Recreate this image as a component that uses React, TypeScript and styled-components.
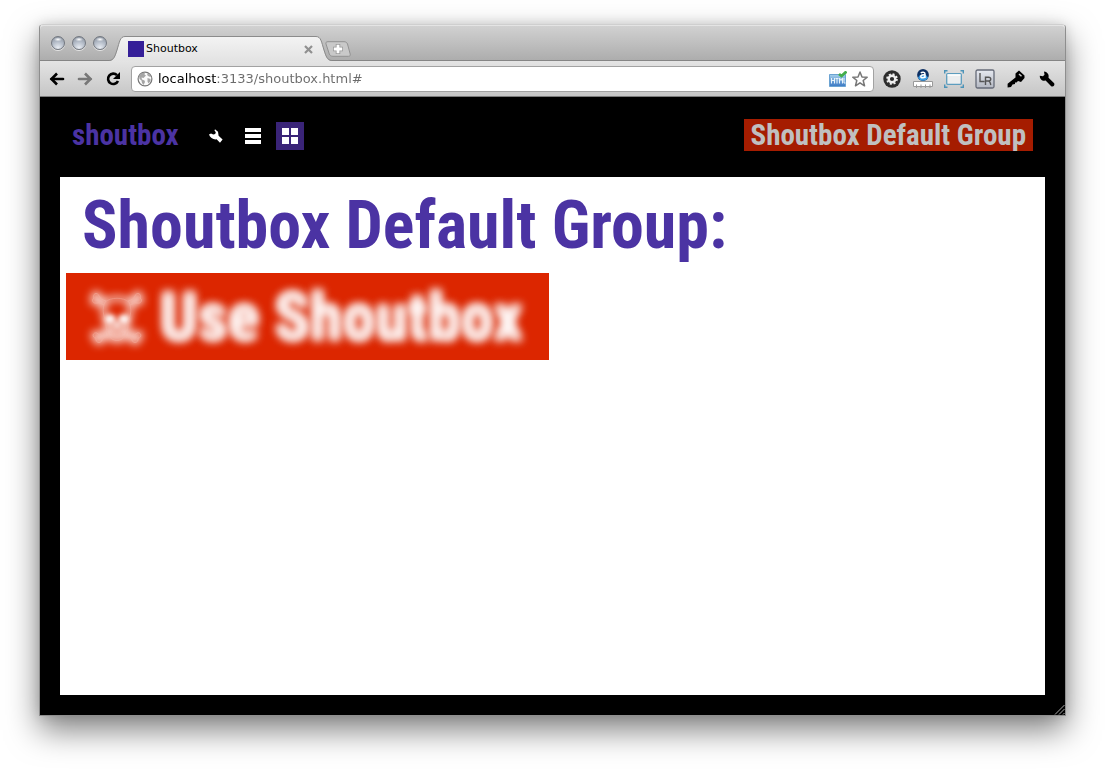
import React, { useState } from "react";
import styled, { createGlobalStyle, css } from "styled-components";

const GlobalStyle = createGlobalStyle`
  * { box-sizing: border-box; }
  body { margin: 0; background: #fff; }
  button { margin: 0; padding: 0; border: 0; background: none; font: inherit; color: inherit; cursor: pointer; }
  svg { display: block; }
`;

const displayFont = css`
  font-family: "Roboto Condensed", "Open Sans Condensed", "Liberation Sans", sans-serif;
  font-weight: 700;
`;
const uiFont = css`
  font-family: "DejaVu Sans", "Noto Sans", sans-serif;
`;

const Desktop = styled.div`
  display: flex;
  min-height: 100vh;
  padding: 24px 39px 54px;
`;

const BrowserWindow = styled.div`
  position: relative;
  display: flex;
  flex-direction: column;
  flex: 1;
  min-width: 0;
  border: 1px solid #8e8e8e;
  border-top-color: #cfcfcf;
  border-radius: 4px 4px 0 0;
  box-shadow: 0 14px 32px rgba(0, 0, 0, 0.5), 0 0 12px rgba(0, 0, 0, 0.12);
`;

const TabStrip = styled.div`
  display: flex;
  align-items: flex-end;
  height: 36px;
  border-radius: 4px 4px 0 0;
  background: linear-gradient(#d2d2d2, #acacac);
  box-shadow: inset 0 1px 0 #e4e4e4, inset 0 -1px 0 #858585;
`;

const Lights = styled.div`
  display: flex;
  gap: 7px;
  padding: 0 2px 11px 11px;
`;

const Light = styled.button`
  width: 14px;
  height: 14px;
  border: 1px solid #737880;
  border-radius: 50%;
  background: radial-gradient(ellipse 4px 2px at 50% 20%, #fff, transparent),
    radial-gradient(circle at 50% 90%, #e9edf3 0, #b4bcc8 50%, #858d99 100%);
  box-shadow: 0 1px 0 #e4e4e4;
`;

const Tab = styled.div`
  display: flex;
  flex: 0 0 223px;
  height: 25px;
`;

const TabBody = styled.div`
  ${uiFont}
  display: flex;
  align-items: center;
  flex: 1;
  padding: 0 3px;
  border-top: 1px solid #8b8b8b;
  background: linear-gradient(#f3f3f3, #e3e3e3);
  font-size: 11px;
  line-height: 16px;
  color: #000;
`;

const Favicon = styled.span`
  width: 16px;
  height: 16px;
  margin-right: 2px;
  background: #351f98;
`;

const TabTitle = styled.span`
  flex: 1;
`;

const NewTab = styled.button`
  position: relative;
  margin: 0 0 4px -7px;
`;

const Toolbar = styled.div`
  display: flex;
  align-items: center;
  height: 36px;
  padding: 0 3px;
  border-bottom: 1px solid #7c7c7c;
  background: linear-gradient(#e4e4e4, #c6c6c6);
`;

const ToolButton = styled.button<{ $width: number }>`
  display: flex;
  align-items: center;
  justify-content: center;
  flex: 0 0 ${(p) => p.$width}px;
  height: 28px;
`;

const AddressBar = styled.label`
  display: flex;
  align-items: center;
  flex: 1;
  min-width: 0;
  height: 26px;
  margin: 0 2px 0 4px;
  padding: 0 5px;
  gap: 5px;
  border: 1px solid #a2a2a2;
  border-radius: 4px;
  background: #fff;
`;

const AddressInput = styled.input`
  ${uiFont}
  flex: 1;
  min-width: 0;
  height: 22px;
  padding: 0;
  border: 0;
  outline: 0;
  background: linear-gradient(90deg, #000 59px, #6b6b6b 59px);
  background-clip: text;
  -webkit-background-clip: text;
  color: transparent;
  caret-color: #000;
  font-size: 13px;
`;

const Page = styled.div`
  ${displayFont}
  display: flex;
  flex-direction: column;
  flex: 1;
  padding: 0 20px 20px;
  background: #000;
`;

const Header = styled.header`
  display: flex;
  align-items: center;
  height: 80px;
  padding: 0 12px 4px;
  font-size: 29px;
  line-height: 32px;
`;

const Logo = styled.a`
  flex: 0 0 130px;
  color: #4b33a3;
  text-decoration: none;
`;

const Views = styled.nav`
  display: flex;
  flex: 1;
  gap: 9px;
  padding-top: 2px;
`;

const ViewButton = styled.button<{ $active?: boolean }>`
  display: flex;
  align-items: center;
  justify-content: center;
  width: 28px;
  height: 28px;
  background: ${(p) => (p.$active ? "#3a2478" : "transparent")};
`;

const GroupTag = styled.button`
  padding: 0 7px;
  background: #a51c00;
  color: #c0c0c0;
  white-space: nowrap;
`;

const Board = styled.main`
  flex: 1;
  padding: 7px 6px;
  background: #fff;
`;

const Heading = styled.h1`
  margin: 0 0 5px;
  padding: 0 16px;
  font-size: 66px;
  line-height: 84px;
  color: #4b33a3;
`;

const Shout = styled.button`
  display: flex;
  align-items: center;
  height: 87px;
  padding: 2px 26px 0 24px;
  gap: 16px;
  background: #dc2600;
  font-size: 66px;
  line-height: 85px;
  white-space: nowrap;
`;

const ShoutText = styled.span`
  color: transparent;
  text-shadow: 0 0 10px #fff, 0 0 10px rgba(255, 255, 255, 0.7);
`;

const ResizeGrip = styled.svg`
  position: absolute;
  right: 0;
  bottom: 0;
`;

const TabEdge = ({ flip, id }: { flip?: boolean; id: string }) => (
  <svg width="16" height="25" viewBox="0 0 16 25" aria-hidden="true">
    <defs>
      <linearGradient id={id} x1="0" y1="0" x2="0" y2="1">
        <stop offset="0" stopColor="#f3f3f3" />
        <stop offset="1" stopColor="#e3e3e3" />
      </linearGradient>
    </defs>
    <g transform={flip ? "translate(16 0) scale(-1 1)" : undefined}>
      <path d="M0 25C5 24.500 6 21 8 15C10.500 7 11 .5 16 .5V25Z" fill={`url(#${id})`} />
      <path d="M0 24.500C5 24.300 6 20 8 14C10.500 6 11 .5 16 .5" fill="none" stroke="#8b8b8b" />
    </g>
  </svg>
);

const PlusTab = () => (
  <svg width="26" height="16" viewBox="0 0 26 16">
    <path d="M3 .7H19C21 .7 21.800 1.500 22.500 3L25.200 13C25.500 14.600 25 15.300 23.500 15.300H8C6 15.300 5 14.500 4.300 13L1 3C.5 1.500 1.200 .7 3 .7Z" fill="#c9c9c9" stroke="#929292" />
    <path d="M13 3V13M8 8H18" stroke="#999" strokeWidth="4.500" />
    <path d="M13 3.800V12.200M8.800 8H17.200" stroke="#fff" strokeWidth="2.800" />
  </svg>
);

const Arrow = ({ forward }: { forward?: boolean }) => (
  <svg width="16" height="14" viewBox="0 0 16 14">
    <g transform={forward ? "translate(16 0) scale(-1 1)" : undefined} fill="none" stroke={forward ? "#777" : "#000"} strokeWidth="2.600">
      <path d="M2.500 7H14" strokeLinecap="round" />
      <path d="M8 1.500L2.500 7L8 12.500" />
    </g>
  </svg>
);

const Reload = () => (
  <svg width="16" height="16" viewBox="0 0 16 16">
    <path d="M12 4.200A5.200 5.200 0 1 0 13 10" fill="none" stroke="#000" strokeWidth="2.600" />
    <path d="M15 1V8H8Z" />
  </svg>
);

const Globe = () => (
  <svg width="16" height="16" viewBox="0 0 16 16" aria-hidden="true">
    <circle cx="8" cy="8" r="6.900" fill="#fafafa" stroke="#777" strokeWidth="1.200" />
    <path d="M2 5L5 2L8 1.500L7.500 3.500L9 4.500L6.500 7L4.500 6.500L5 8.500L7.500 9.500L8 11L6.500 14L5 12L4.500 9.500L2.500 8ZM10 2.500L12.500 3.500L14 6L12 5.500L10.500 4.500ZM10.500 7L13.500 8L13.500 10L11.500 12.500L10.500 10.500Z" fill="#a5a5a5" />
  </svg>
);

const HtmlCheck = () => (
  <svg width="18" height="16" viewBox="0 0 18 16" aria-hidden="true">
    <defs>
      <linearGradient id="htmlBlue" x1="0" y1="0" x2="0" y2="1">
        <stop offset="0" stopColor="#a6d0ec" />
        <stop offset="1" stopColor="#3a78c4" />
      </linearGradient>
    </defs>
    <path d="M.5 3.500H16.500V15.500H.5Z" fill="url(#htmlBlue)" stroke="#6ba3d2" />
    <path d="M2.500 7V12.500M5.500 7V12.500M2.500 9.500H5.500M6.500 7.500H9.500M8 7.500V12.500M10.500 12.500V7L12 9.500L13.500 7V12.500M15 7V12H16.500" fill="none" stroke="#e8f3fb" />
    <path d="M10 3L12.500 5L17.500 .5" fill="none" stroke="#43ad4b" strokeWidth="2.800" />
  </svg>
);

const Star = () => (
  <svg width="16" height="16" viewBox="0 0 16 16">
    <path d="M8 1L10 6L15.200 6.200L11.200 9.500L12.500 14.800L8 11.800L3.500 14.800L4.800 9.500L.8 6.200L6 6Z" fill="#fff" stroke="#777" strokeWidth="1.500" strokeLinejoin="round" />
  </svg>
);

const GearBadge = () => (
  <svg width="18" height="18" viewBox="0 0 18 18">
    <circle cx="9" cy="9" r="8.700" fill="#2c2c2c" />
    <circle cx="9" cy="9" r="3.300" fill="none" stroke="#eee" strokeWidth="2.400" />
    <circle cx="9" cy="9" r="4.900" fill="none" stroke="#eee" strokeWidth="1.800" strokeDasharray="2 1.850" />
  </svg>
);

const RulerBadge = () => (
  <svg width="20" height="20" viewBox="0 0 20 20">
    <circle cx="10" cy="6" r="5.900" fill="#0d2f63" />
    <path d="M5 8.500A5.500 5.500 0 0 0 15 8.500L13 6H7Z" fill="#3d9be0" />
    <path d="M7.800 4C9 2.800 12 2.800 12 5V9M12 5.800C9.500 5.600 7.800 6 7.800 7.600C7.800 9.200 11 9.200 12 7.500" fill="none" stroke="#fff" strokeWidth="1.500" />
    <path d="M.5 12.500H19.500V17.500H.5Z" fill="#fff" stroke="#999" />
    <path d="M3.500 15.500V19M8 15.500V19M12.500 15.500V19M17 15.500V19" stroke="#999" />
  </svg>
);

const FrameBadge = () => (
  <svg width="20" height="18" viewBox="0 0 20 18">
    <path d="M.7 3.500V.7H3.500M16.500 .7H19.300V3.500M19.300 14.500V17.300H16.500M3.500 17.300H.7V14.500" fill="none" stroke="#4b93b8" strokeWidth="1.400" />
    <rect x="2.700" y="3.700" width="14.600" height="10.600" rx="1" fill="#eceeef" stroke="#5d9dbe" strokeWidth="1.300" />
    <path d="M3.500 5H16.500" stroke="#fff" strokeWidth="1.500" />
  </svg>
);

const LrBadge = () => (
  <svg width="20" height="20" viewBox="0 0 20 20">
    <defs>
      <linearGradient id="lrFill" x1="0" y1="0" x2="0" y2="1">
        <stop offset="0" stopColor="#e6e9f0" />
        <stop offset="1" stopColor="#b4b8c2" />
      </linearGradient>
    </defs>
    <rect x="1" y="1" width="18" height="18" rx="1.500" fill="url(#lrFill)" stroke="#666b78" strokeWidth="1.300" />
    <path d="M5 4V12.500H9.500M10.500 16V8.200H13.500C16.500 8.200 16.500 12 13.500 12H10.500M13.500 12C15.500 12 15 14 15.800 16" fill="none" stroke="#555" strokeWidth="1.400" />
  </svg>
);

const KeyBadge = () => (
  <svg width="18" height="18" viewBox="0 0 18 18">
    <path d="M8.500 3.500L12 .5L17.500 5.500V8L14 12L11 11L9.500 12.500H8V14L5.500 14.500L4 17L.6 17.500V13.800L8.500 7.500Z" fill="#000" />
    <path d="M12 4L14.500 6.200" stroke="#ccc" strokeWidth="1.500" />
  </svg>
);

const Wrench = () => (
  <svg width="16" height="16" viewBox="0 0 16 16">
    <path d="M5 .6L5.500 3.800L4 5.200L.8 4.700C.6 8 3 10.200 6.600 9.600L12.200 15.200C14.400 16 16 14.300 15.200 12.200L9.500 6.800C10.400 3.500 8 .8 5 .6Z" fill="#000" />
  </svg>
);

const HeaderWrench = () => (
  <svg width="14" height="14" viewBox="0 0 14 14">
    <path d="M6 .3L9 2.800L9.600 6.800L13.600 10.500L11 13.800L7.600 10.300C4.500 10.800 1 9 0 5.600L2 4.500L4.200 5.600L6.200 5L6.800 3.300L5.500 1.600Z" fill="#fff" />
  </svg>
);

const ListIcon = () => (
  <svg width="16" height="16" viewBox="0 0 16 16">
    <path d="M0 0H16V4H0ZM0 6H16V10H0ZM0 12H16V16H0Z" fill="#fff" />
  </svg>
);

const GridIcon = () => (
  <svg width="16" height="16" viewBox="0 0 16 16">
    <path d="M0 0H7V7H0ZM9 0H16V7H9ZM0 9H7V16H0ZM9 9H16V16H9Z" fill="#fff" />
  </svg>
);

const bones =
  "M13 13C10 12 9 10 6 11C2 12 0 8 3 6C1 1 7 0 8 4C9 7 12 8 15 9M39 13C42 12 43 10 46 11C50 12 52 8 49 6C51 1 45 0 44 4C43 7 40 8 37 9M15 42C11 41 8 44 6 41C1 40 1 46 5 46C4 51 10 52 11 48C12 46 13 45 17 45M37 42C41 41 44 44 46 41C51 40 51 46 47 46C48 51 42 52 41 48C40 46 39 45 35 45";
const skull = "M14 10C20 5 32 5 38 10C41 17 40 23 37 29C37 34 37 38 34 44C30 50 22 50 18 44C15 38 15 34 15 29C12 23 11 17 14 10Z";

const Skull = () => (
  <svg width="54" height="54" viewBox="-1 -1 54 54" overflow="visible" aria-hidden="true">
    <defs>
      <filter id="skullBlur" x="-40%" y="-40%" width="180%" height="180%">
        <feGaussianBlur stdDeviation="4" />
      </filter>
      <filter id="eyeBlur" x="-100%" y="-100%" width="300%" height="300%">
        <feGaussianBlur stdDeviation="2.500" />
      </filter>
    </defs>
    <g filter="url(#skullBlur)" stroke="#fff" opacity=".85">
      <path d={bones} fill="none" strokeWidth="5" />
      <path d={skull} fill="none" strokeWidth="5" />
      <path d="M13 20L20 24L26 28L32 24L39 20L36 44L32 49H20L16 44Z" fill="#fff" fillOpacity=".7" stroke="none" />
    </g>
    <g filter="url(#eyeBlur)" fill="#fff">
      <ellipse cx="19" cy="27" rx="5" ry="4" />
      <ellipse cx="33" cy="27" rx="5" ry="4" />
      <path d="M26 29L29 35H23Z" />
    </g>
    <g fill="none" stroke="#f5b5a6" opacity=".5">
      <path d={bones} />
      <path d={skull} strokeWidth=".8" />
      <path d="M19 41C23 43 29 43 33 41M22 40V45M26 41V46M30 40V45" strokeWidth=".8" />
    </g>
  </svg>
);

const extensions = [
  { label: "Extension settings", icon: <GearBadge /> },
  { label: "Ruler", icon: <RulerBadge /> },
  { label: "Window size", icon: <FrameBadge /> },
  { label: "LiveReload", icon: <LrBadge /> },
  { label: "Key", icon: <KeyBadge /> },
  { label: "Menu", icon: <Wrench /> },
];

export default function App() {
  const [url, setUrl] = useState("localhost:3133/shoutbox.html#");
  return (
    <>
      <GlobalStyle />
      <Desktop>
        <BrowserWindow>
          <TabStrip>
            <Lights>
              <Light aria-label="Close" />
              <Light aria-label="Minimize" />
              <Light aria-label="Zoom" />
            </Lights>
            <Tab>
              <TabEdge id="edgeLeft" />
              <TabBody>
                <Favicon />
                <TabTitle>Shoutbox</TabTitle>
                <button aria-label="Close tab">
                  <svg width="9" height="9" viewBox="0 0 9 9">
                    <path d="M1 1L8 8M8 1L1 8" stroke="#909090" strokeWidth="2.200" />
                  </svg>
                </button>
              </TabBody>
              <TabEdge id="edgeRight" flip />
            </Tab>
            <NewTab aria-label="New tab">
              <PlusTab />
            </NewTab>
          </TabStrip>
          <Toolbar>
            <ToolButton $width={28} aria-label="Back"><Arrow /></ToolButton>
            <ToolButton $width={28} aria-label="Forward"><Arrow forward /></ToolButton>
            <ToolButton $width={28} aria-label="Reload"><Reload /></ToolButton>
            <AddressBar>
              <Globe />
              <AddressInput aria-label="Address" spellCheck={false} value={url} onChange={(e) => setUrl(e.target.value)} />
              <HtmlCheck />
              <button aria-label="Bookmark"><Star /></button>
            </AddressBar>
            {extensions.map((e) => (
              <ToolButton key={e.label} $width={31} aria-label={e.label}>{e.icon}</ToolButton>
            ))}
          </Toolbar>
          <Page>
            <Header>
              <Logo href="#">shoutbox</Logo>
              <Views>
                <ViewButton aria-label="Settings"><HeaderWrench /></ViewButton>
                <ViewButton aria-label="List view"><ListIcon /></ViewButton>
                <ViewButton aria-label="Grid view" $active><GridIcon /></ViewButton>
              </Views>
              <GroupTag>Shoutbox Default Group</GroupTag>
            </Header>
            <Board>
              <Heading>Shoutbox Default Group:</Heading>
              <Shout>
                <Skull />
                <ShoutText>Use Shoutbox</ShoutText>
              </Shout>
            </Board>
          </Page>
          <ResizeGrip width="11" height="11" viewBox="0 0 11 11" aria-hidden="true">
            <path d="M1 10.500L10.500 1M5 10.500L10.500 5M9 10.500L10.500 9" stroke="#aaa" />
          </ResizeGrip>
        </BrowserWindow>
      </Desktop>
    </>
  );
}
